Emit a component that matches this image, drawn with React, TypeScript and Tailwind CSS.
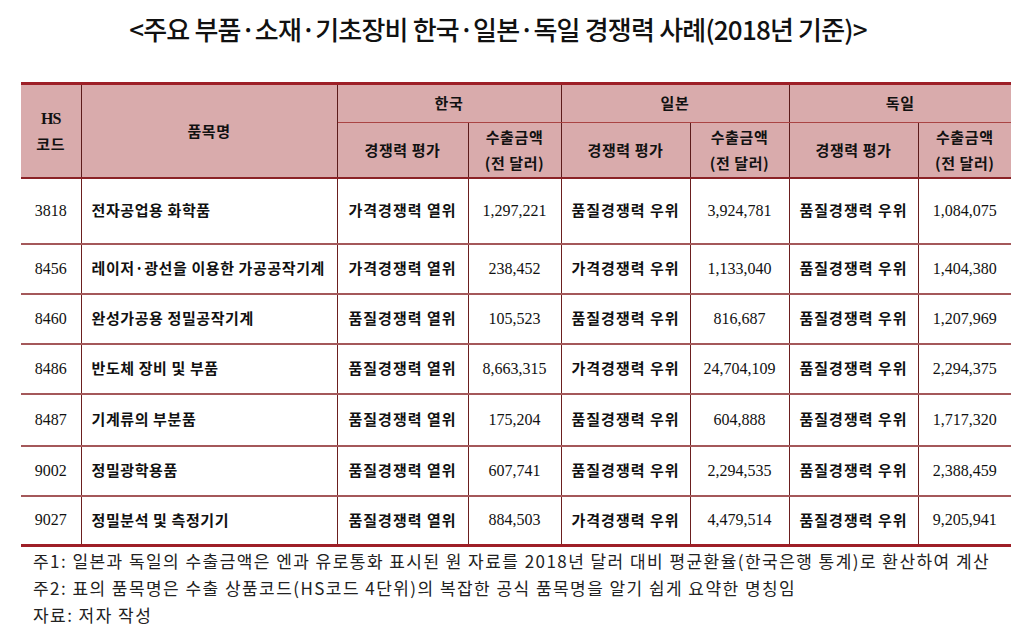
import React from "react";

const rows = [
  ["3818", "전자공업용 화학품", "가격경쟁력 열위", "1,297,221", "품질경쟁력 우위", "3,924,781", "품질경쟁력 우위", "1,084,075"],
  ["8456", "레이저·광선을 이용한 가공공작기계", "가격경쟁력 열위", "238,452", "가격경쟁력 우위", "1,133,040", "품질경쟁력 우위", "1,404,380"],
  ["8460", "완성가공용 정밀공작기계", "품질경쟁력 열위", "105,523", "품질경쟁력 우위", "816,687", "품질경쟁력 우위", "1,207,969"],
  ["8486", "반도체 장비 및 부품", "품질경쟁력 열위", "8,663,315", "가격경쟁력 우위", "24,704,109", "품질경쟁력 우위", "2,294,375"],
  ["8487", "기계류의 부분품", "품질경쟁력 열위", "175,204", "품질경쟁력 우위", "604,888", "품질경쟁력 우위", "1,717,320"],
  ["9002", "정밀광학용품", "품질경쟁력 열위", "607,741", "품질경쟁력 우위", "2,294,535", "품질경쟁력 우위", "2,388,459"],
  ["9027", "정밀분석 및 측정기기", "품질경쟁력 열위", "884,503", "가격경쟁력 우위", "4,479,514", "품질경쟁력 우위", "9,205,941"],
];

const rowHeights = ["h-[66px]", "h-[50px]", "h-[50px]", "h-[50px]", "h-[52px]", "h-[50px]", "h-[50px]"];

const kr = { fontFamily: '"Noto Sans CJK KR", sans-serif' };
const num = { fontFamily: '"Liberation Serif", "Noto Sans CJK KR", serif' };

export default function App() {
  return (
    <div className="w-[1024px] h-[628px] bg-white overflow-hidden text-[#111]" style={kr}>
      <div className="h-[56px] flex items-center justify-center pr-[28px] pt-[2px]">
        <h1 className="text-[26px] font-medium tracking-[-0.8px] text-[#111] leading-none">
          &lt;주요 부품·소재·기초장비 한국·일본·독일 경쟁력 사례(2018년 기준)&gt;
        </h1>
      </div>
      <div className="pl-[21px] pt-[26px]">
        <table className="table-fixed border-collapse w-[990px] border-t-[3px] border-b-[3px] border-t-[#9e1f27] border-b-[#9e1f27]">
          <colgroup>
            <col className="w-[60px]" />
            <col className="w-[256px]" />
            <col className="w-[131px]" />
            <col className="w-[93px]" />
            <col className="w-[129px]" />
            <col className="w-[99px]" />
            <col className="w-[129px]" />
            <col className="w-[93px]" />
          </colgroup>
          <thead className="bg-[#d9abac] text-[15px] font-bold tracking-[0.6px]">
            <tr className="h-[39px]">
              <th rowSpan={2} className="border-r border-r-[#5c1b1b] leading-[25px] font-bold">
                <div style={num} className="text-[16px] tracking-[-1px]">HS</div>
                <div>코드</div>
              </th>
              <th rowSpan={2} className="border-r border-r-[#5c1b1b] font-bold">품목명</th>
              <th colSpan={2} className="border-r border-r-[#5c1b1b] border-b border-b-[#a44] font-bold">한국</th>
              <th colSpan={2} className="border-r border-r-[#5c1b1b] border-b border-b-[#a44] font-bold">일본</th>
              <th colSpan={2} className="border-b border-b-[#a44] font-bold">독일</th>
            </tr>
            <tr className="h-[55px] border-b-2 border-b-[#8b2226]">
              <th className="border-r border-r-[#5c1b1b] font-bold">경쟁력 평가</th>
              <th className="border-r border-r-[#5c1b1b] font-bold leading-[26px]">수출금액<br />(전 달러)</th>
              <th className="border-r border-r-[#5c1b1b] font-bold">경쟁력 평가</th>
              <th className="border-r border-r-[#5c1b1b] font-bold leading-[26px]">수출금액<br />(전 달러)</th>
              <th className="border-r border-r-[#5c1b1b] font-bold">경쟁력 평가</th>
              <th className="font-bold leading-[26px]">수출금액<br />(전 달러)</th>
            </tr>
          </thead>
          <tbody className="text-[15px]">
            {rows.map((r, i) => (
              <tr key={r[0]} className={`${rowHeights[i]} ${i < rows.length - 1 ? "border-b-2 border-b-[#a4585a]" : ""}`}>
                <td style={num} className="text-center text-[16px] border-r border-r-[#6b1f1f]">{r[0]}</td>
                <td className="pl-[10px] font-semibold tracking-[0.6px] border-r border-r-[#6b1f1f] whitespace-nowrap">{r[1]}</td>
                <td className="text-center font-semibold tracking-[1px] border-r border-r-[#6b1f1f] whitespace-nowrap">{r[2]}</td>
                <td style={num} className="text-center text-[16px] border-r border-r-[#6b1f1f]">{r[3]}</td>
                <td className="text-center font-semibold tracking-[1px] border-r border-r-[#6b1f1f] whitespace-nowrap">{r[4]}</td>
                <td style={num} className="text-center text-[16px] border-r border-r-[#6b1f1f]">{r[5]}</td>
                <td className="text-center font-semibold tracking-[1px] border-r border-r-[#6b1f1f] whitespace-nowrap">{r[6]}</td>
                <td style={num} className="text-center text-[16px]">{r[7]}</td>
              </tr>
            ))}
          </tbody>
        </table>
      </div>
      <div className="pl-[33px] text-[17px] leading-[27px] text-[#222] whitespace-nowrap tracking-[1.45px]">
        <div>주1: 일본과 독일의 수출금액은 엔과 유로통화 표시된 원 자료를 2018년 달러 대비 평균환율(한국은행 통계)로 환산하여 계산</div>
        <div>주2: 표의 품목명은 수출 상품코드(HS코드 4단위)의 복잡한 공식 품목명을 알기 쉽게 요약한 명칭임</div>
        <div>자료: 저자 작성</div>
      </div>
    </div>
  );
}
